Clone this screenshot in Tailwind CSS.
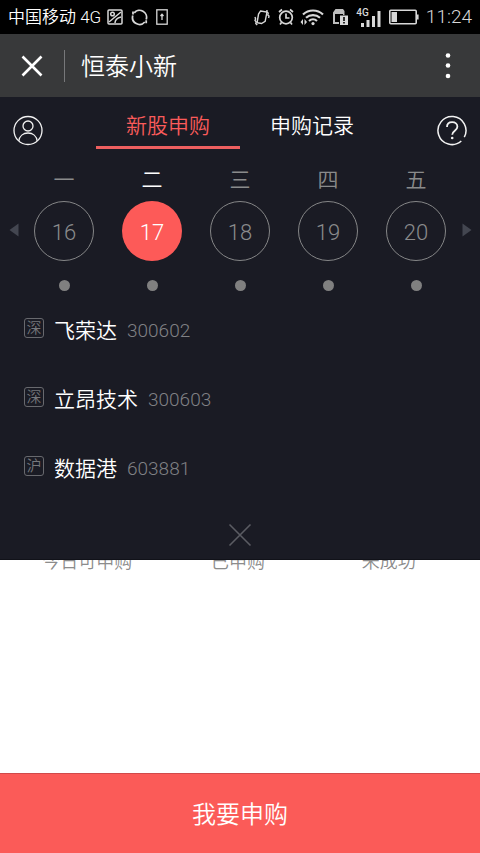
<!DOCTYPE html>
<html lang="zh-CN">
<head>
<meta charset="utf-8">
<meta name="viewport" content="width=device-width, initial-scale=1">
<title>恒泰小新</title>
<script src="https://cdn.jsdelivr.net/npm/@tailwindcss/browser@4"></script>
</head>
<body class="flex min-h-screen flex-col bg-white font-['Roboto','Noto_Sans_CJK_SC',sans-serif] text-white">

<!-- System status bar -->
<div class="flex h-[34px] shrink-0 items-center bg-black pr-2 pl-2 text-[#d8d8d8]">
  <span class="text-[17px] leading-6 font-[350] whitespace-nowrap text-white">中国移动 4G</span>
  <div class="flex items-center gap-2 pl-[6px]" aria-hidden="true">
    <svg class="size-4" viewBox="0 0 16 16" fill="none" stroke="currentColor" stroke-width="1.5"><rect x="1" y="1" width="14" height="14" rx="1"/><circle cx="5.5" cy="5" r="1.8"/><path d="M2 13 14 3M8 14c0-3 2-5 6-6"/></svg>
    <svg class="size-[17px]" viewBox="0 0 17 17" fill="none" stroke="currentColor" stroke-width="1.8"><path d="M3.200 3.800A7 7 0 0 1 15.200 10.500M13.800 13A7 7 0 0 1 1.800 6.500"/><path d="M2 2.500v3M15.200 14.300v-3"/></svg>
    <svg class="h-4 w-3" viewBox="0 0 12 16" fill="none" stroke="currentColor" stroke-width="1.3"><rect x=".8" y=".8" width="10.400" height="14.400"/><path d="M6 11V6M4.500 7 6 5.300 7.500 7"/></svg>
  </div>
  <div class="ml-auto flex items-center" aria-hidden="true">
    <svg class="h-[17px] w-4" viewBox="0 0 16 17" fill="none" stroke="currentColor" stroke-width="1.4"><path d="M5 2.500 11.500 2 12 11.500 9 14.500 4.500 14.800 3.800 6z" transform="rotate(14 8 8.500)"/><path d="m1 8 .6 2-.6 1.500 1.200 1.500-.4 1.500 1.400 1.500M13 1l-.2 2 1.400 1-.4 2 1.200 1-.4 2"/></svg>
    <svg class="ml-2 h-[18px] w-4" viewBox="0 0 16 18" fill="none" stroke="currentColor" stroke-width="1.7"><circle cx="8" cy="9.500" r="6.300"/><path d="M8 5.500V10h3.500M1 4l3-2.500M15 4l-3-2.500M3.500 14.500 2 16.500M12.500 14.500l1.500 2"/></svg>
    <svg class="ml-[6px] h-[18px] w-6" viewBox="0 0 24 18" fill="none" stroke="currentColor" stroke-width="2.200"><path d="M3 6.500a14.500 14.500 0 0 1 20 0M6 9.800a10.500 10.500 0 0 1 14 0M9 13a6 6 0 0 1 8 0"/><circle cx="13" cy="15.600" r="1.600" fill="currentColor" stroke="none"/><path d="m.5 14 2.500-3v6zM7 14l-2.500-3v6z" fill="currentColor" stroke="none"/></svg>
    <svg class="ml-2 h-[18px] w-4" viewBox="0 0 16 18"><path d="M1 4.500 3.500 1H11l1.500 2v4H11V6H3v8h4v2H1z" fill="#bdbdbd"/><path d="M8 7.500h8V17H8z" fill="#d8d8d8"/><path d="M12 9v4M12 14v1.500" stroke="#000" stroke-width="1.600"/></svg>
    <div class="ml-2 flex items-end">
      <span class="-mr-2 self-start text-[10px] leading-[9px] font-medium">4G</span>
      <svg class="mt-[3px] h-4 w-5" viewBox="0 0 20 16" fill="currentColor"><path d="M0 12h3v4H0zM5.500 9h3v7h-3zM11 5h3v11h-3zM16.500 0h3v16h-3z"/></svg>
    </div>
    <svg class="ml-2 h-4 w-[30px]" viewBox="0 0 30 16"><rect x=".8" y="1.300" width="26.400" height="13.400" rx="1" fill="none" stroke="currentColor" stroke-width="1.600"/><path d="M28 5.500h1.600v5H28z" fill="currentColor"/><path d="M2.500 3H8v10H2.500z" fill="currentColor"/></svg>
    <time class="ml-[7px] text-[19px] leading-6 font-light">11:24</time>
  </div>
</div>

<!-- Page title bar -->
<header class="flex h-[63px] shrink-0 items-center bg-[#38393a] pr-5 pl-5">
  <button type="button" aria-label="关闭" class="size-6">
    <svg class="size-6" viewBox="0 0 24 24" fill="none" stroke="#fff" stroke-width="2.600"><path d="m2.500 2.500 19 19M21.500 2.500l-19 19"/></svg>
  </button>
  <span class="ml-5 h-8 w-px bg-[#77787a]"></span>
  <h1 class="ml-4 pt-[2px] text-[24px] leading-8 font-[350]">恒泰小新</h1>
  <button type="button" aria-label="更多" class="ml-auto h-8 w-6">
    <svg class="h-8 w-6" viewBox="0 0 24 32" fill="#fff"><circle cx="12" cy="5.500" r="2.300"/><circle cx="12" cy="15.500" r="2.300"/><circle cx="12" cy="26" r="2.300"/></svg>
  </button>
</header>

<main class="relative flex min-h-[676px] flex-1 flex-col">
  <!-- Order totals, partly hidden while the calendar sheet is open -->
  <div class="grid grid-cols-3 pt-[453px] pr-4 pl-3 text-center text-[18px] leading-6 font-[350] text-[#8c8c8c]">
    <span>今日可申购</span>
    <span>已申购</span>
    <span>未成功</span>
  </div>

  <!-- Calendar sheet -->
  <section class="absolute inset-x-0 top-0 flex h-[463px] flex-col border-b border-[#111219] bg-[#1a1b24]">
    <nav class="flex px-3 pt-3">
      <button type="button" aria-label="我的" class="mt-[5px] size-8">
        <svg class="size-8" viewBox="0 0 32 32" fill="none" stroke="#f2f2f2" stroke-width="1.300"><circle cx="16" cy="16.500" r="14"/><circle cx="16" cy="12" r="5"/><path d="M6.800 27c.6-5 4.400-8 9.200-8s8.600 3 9.200 8"/></svg>
      </button>
      <div class="mx-[52px] grid flex-1 grid-cols-2 text-[21px] leading-8 font-[350]">
        <button type="button" class="h-10 border-b-[3px] border-[#ee5f5f] pb-1 text-[#fb5b5b]">新股申购</button>
        <button type="button" class="h-10 border-b-[3px] border-transparent pb-1">申购记录</button>
      </div>
      <button type="button" aria-label="帮助" class="mt-[5px] size-8">
        <svg class="size-8" viewBox="0 0 32 32" fill="none" stroke="#f2f2f2" stroke-width="1.500"><path d="M25.300 27A14 14 0 1 1 28.300 23.200"/><path d="M11 13c0-3 2.200-4.800 5.200-4.800s5.200 1.800 5.200 4.500c0 4-5.200 4-5.200 8" stroke-width="1.800"/><circle cx="16.200" cy="24" r="1.300" fill="#f2f2f2" stroke="none"/></svg>
      </button>
    </nav>

    <div class="flex items-center pt-[15px]">
      <button type="button" aria-label="上一周" class="flex h-7 w-5 items-center justify-end pt-1 pr-px">
        <svg class="h-[14px] w-[10px]" viewBox="0 0 10 14" fill="#434650"><path d="M9.500.5v13L.5 7z"/></svg>
      </button>
      <div class="grid flex-1 grid-cols-5 text-[21px] font-[350] text-[#8a8b8c]">
        <button type="button" class="flex flex-col items-center leading-8"><span>一</span><span class="mt-[5px] flex size-[60px] items-center justify-center rounded-full border border-[#858687] pt-[3px] text-[22px]">16</span><span class="mt-[19px] size-[11px] rounded-full bg-[#808080]"></span></button>
        <button type="button" class="flex flex-col items-center leading-8 text-white"><span>二</span><span class="mt-[5px] flex size-[60px] items-center justify-center rounded-full bg-[#fd5a58] pt-[3px] text-[22px]">17</span><span class="mt-[19px] size-[11px] rounded-full bg-[#808080]"></span></button>
        <button type="button" class="flex flex-col items-center leading-8"><span>三</span><span class="mt-[5px] flex size-[60px] items-center justify-center rounded-full border border-[#858687] pt-[3px] text-[22px]">18</span><span class="mt-[19px] size-[11px] rounded-full bg-[#808080]"></span></button>
        <button type="button" class="flex flex-col items-center leading-8"><span>四</span><span class="mt-[5px] flex size-[60px] items-center justify-center rounded-full border border-[#858687] pt-[3px] text-[22px]">19</span><span class="mt-[19px] size-[11px] rounded-full bg-[#808080]"></span></button>
        <button type="button" class="flex flex-col items-center leading-8"><span>五</span><span class="mt-[5px] flex size-[60px] items-center justify-center rounded-full border border-[#858687] pt-[3px] text-[22px]">20</span><span class="mt-[19px] size-[11px] rounded-full bg-[#808080]"></span></button>
      </div>
      <button type="button" aria-label="下一周" class="flex h-7 w-5 items-center pt-1 pl-[2px]">
        <svg class="h-[14px] w-[10px]" viewBox="0 0 10 14" fill="#434650"><path d="M.5.5v13L9.500 7z"/></svg>
      </button>
    </div>

    <ul class="pt-[5px] font-[350]">
      <li class="flex h-[69px] items-center px-6"><span class="mb-[6px] flex size-5 items-center justify-center rounded-[3px] border border-[#68696e] text-[15px] leading-4 text-[#77787c]">深</span><span class="ml-[10px] text-[21px] leading-8">飞荣达</span><span class="ml-[10px] text-[19px] leading-8 text-[#808185]">300602</span></li>
      <li class="flex h-[69px] items-center px-6"><span class="mb-[6px] flex size-5 items-center justify-center rounded-[3px] border border-[#68696e] text-[15px] leading-4 text-[#77787c]">深</span><span class="ml-[10px] text-[21px] leading-8">立昂技术</span><span class="ml-[10px] text-[19px] leading-8 text-[#808185]">300603</span></li>
      <li class="flex h-[69px] items-center px-6"><span class="mb-[6px] flex size-5 items-center justify-center rounded-[3px] border border-[#68696e] text-[15px] leading-4 text-[#77787c]">沪</span><span class="ml-[10px] text-[21px] leading-8">数据港</span><span class="ml-[10px] text-[19px] leading-8 text-[#808185]">603881</span></li>
    </ul>

    <button type="button" aria-label="收起" class="mx-auto mt-auto mb-3 size-6">
      <svg class="size-6" viewBox="0 0 24 24" fill="none" stroke="#5b5c63" stroke-width="1.600"><path d="m1.500 1.500 21 21M22.500 1.500l-21 21"/></svg>
    </button>
  </section>
</main>

<button type="button" class="h-20 shrink-0 border-t border-[#d04a4a] bg-[#fb5b58] pt-[2px] text-[24px] leading-8 font-[350]">我要申购</button>
</body>
</html>
